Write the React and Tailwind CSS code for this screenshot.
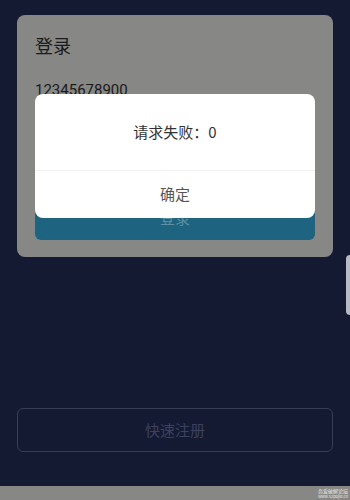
import React from 'react'

const font = { fontFamily: '"Noto Sans CJK SC", "Noto Sans", sans-serif' }

const App = () => {
  return (
    <div className="relative w-[350px] h-[500px] overflow-hidden bg-[#151a33] flex flex-col" style={font}>
      {/* login card, dimmed by the dialog mask */}
      <div className="mt-[15px] mx-[17px] h-[242px] rounded-lg bg-[#878785] px-[18px] flex flex-col">
        <div className="mt-[17px] text-[18px] leading-[26px] text-[#1a1a1a]">登录</div>
        <div className="mt-[22px] text-[15px] leading-[20px] text-[#1a1a1a]" style={{ fontFamily: 'Roboto, "Noto Sans", sans-serif' }}>12345678900</div>
        <div className="mt-[105px] h-[35px] rounded-md bg-[#1e6480] flex items-center justify-center pb-[8px] text-[15px] text-[#5f8fa3]">登录</div>
      </div>

      {/* register button */}
      <div className="mt-[151px] mx-[17px] h-[44px] rounded-md border border-[#373c57] flex items-center justify-center text-[15px] text-[#3c4160]">
        快速注册
      </div>

      {/* bottom system bar */}
      <div className="mt-auto h-[14px] bg-[#878785] flex justify-end items-center pr-[2px]">
        <div className="flex flex-col items-end text-white/80">
          <span className="text-[5px] leading-[6px]">吾爱破解论坛</span>
          <span className="text-[4px] leading-[5px]">www.52pojie.cn</span>
        </div>
      </div>

      {/* scrollbar */}
      <div className="absolute right-0 top-[255px] w-[4px] h-[60px] rounded-l bg-[#b8bac4]" />

      {/* alert dialog */}
      <div className="absolute left-[35px] top-[94px] w-[280px] h-[124px] rounded-lg bg-white flex flex-col">
        <div className="h-[76px] flex items-center justify-center text-[15px] text-[#333]">请求失败：0</div>
        <div className="h-px bg-[#f0f0f0]" />
        <div className="flex-1 flex items-center justify-center text-[15px] text-[#555]">确定</div>
      </div>
    </div>
  )
}

export default App
